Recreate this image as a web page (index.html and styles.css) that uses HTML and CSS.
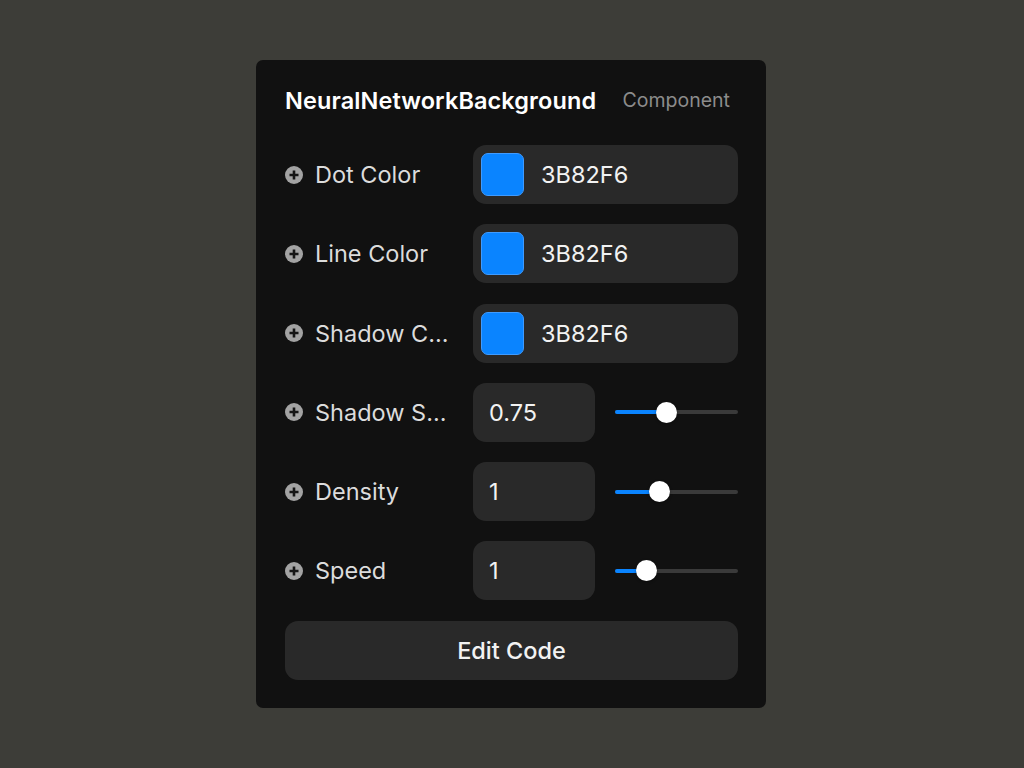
FILE: index.html
```html
<!DOCTYPE html>
<html>
<head>
<meta charset="utf-8">
<link rel="stylesheet" href="styles.css">
</head>
<body>
<div class="panel">
  <div class="header">
    <div class="title">NeuralNetworkBackground</div>
    <div class="subtitle">Component</div>
  </div>
  <div class="rows">
    <div class="row">
      <div class="label"><svg class="plus" viewBox="0 0 18 18"><circle cx="9" cy="9" r="9" fill="#a3a3a3"/><path d="M9 4.5v9M4.5 9h9" stroke="#151515" stroke-width="2.6"/></svg><span>Dot Color</span></div>
      <div class="field color"><span class="swatch"></span><span class="val">3B82F6</span></div>
    </div>
    <div class="row">
      <div class="label"><svg class="plus" viewBox="0 0 18 18"><circle cx="9" cy="9" r="9" fill="#a3a3a3"/><path d="M9 4.5v9M4.5 9h9" stroke="#151515" stroke-width="2.6"/></svg><span>Line Color</span></div>
      <div class="field color"><span class="swatch"></span><span class="val">3B82F6</span></div>
    </div>
    <div class="row">
      <div class="label"><svg class="plus" viewBox="0 0 18 18"><circle cx="9" cy="9" r="9" fill="#a3a3a3"/><path d="M9 4.5v9M4.5 9h9" stroke="#151515" stroke-width="2.6"/></svg><span>Shadow C...</span></div>
      <div class="field color"><span class="swatch"></span><span class="val">3B82F6</span></div>
    </div>
    <div class="row">
      <div class="label"><svg class="plus" viewBox="0 0 18 18"><circle cx="9" cy="9" r="9" fill="#a3a3a3"/><path d="M9 4.5v9M4.5 9h9" stroke="#151515" stroke-width="2.6"/></svg><span>Shadow S...</span></div>
      <div class="numrow">
        <div class="field num"><span class="val">0.75</span></div>
        <div class="slider"><div class="fill" style="width:51px"></div><div class="thumb" style="left:51px"></div></div>
      </div>
    </div>
    <div class="row">
      <div class="label"><svg class="plus" viewBox="0 0 18 18"><circle cx="9" cy="9" r="9" fill="#a3a3a3"/><path d="M9 4.5v9M4.5 9h9" stroke="#151515" stroke-width="2.6"/></svg><span>Density</span></div>
      <div class="numrow">
        <div class="field num"><span class="val">1</span></div>
        <div class="slider"><div class="fill" style="width:44px"></div><div class="thumb" style="left:44px"></div></div>
      </div>
    </div>
    <div class="row">
      <div class="label"><svg class="plus" viewBox="0 0 18 18"><circle cx="9" cy="9" r="9" fill="#a3a3a3"/><path d="M9 4.5v9M4.5 9h9" stroke="#151515" stroke-width="2.6"/></svg><span>Speed</span></div>
      <div class="numrow">
        <div class="field num"><span class="val">1</span></div>
        <div class="slider"><div class="fill" style="width:31px"></div><div class="thumb" style="left:31px"></div></div>
      </div>
    </div>
  </div>
  <div class="button">Edit Code</div>
</div>
</body>
</html>
```
FILE: styles.css
```css
html, body {
  margin: 0;
  padding: 0;
}
body {
  background: #3d3d38;
  width: 1024px;
  height: 768px;
  font-family: Inter, "Noto Sans", sans-serif;
  overflow: hidden;
}
.panel {
  margin: 60px 0 0 256px;
  width: 510px;
  box-sizing: border-box;
  background: #111111;
  border-radius: 7px;
  padding: 24px 28px 28px 29px;
}
.header {
  display: flex;
  align-items: center;
  justify-content: space-between;
  height: 32px;
  padding-right: 8px;
}
.title {
  color: #ffffff;
  font-size: 23.5px;
  font-weight: 600;
  letter-spacing: 0.1px;
}
.subtitle {
  color: #8c8c8c;
  font-size: 19.5px;
  font-weight: 400;
}
.rows {
  margin-top: 29px;
  display: flex;
  flex-direction: column;
  gap: 20.25px;
}
.row {
  display: grid;
  grid-template-columns: 188px 1fr;
  align-items: center;
  height: 59px;
}
.label {
  display: flex;
  align-items: center;
  gap: 12px;
  color: #dcdcdc;
  font-size: 23.5px;
}
.plus {
  width: 18px;
  height: 18px;
  flex: none;
}
.field {
  background: #292929;
  border-radius: 13px;
  height: 59px;
  box-sizing: border-box;
  display: flex;
  align-items: center;
  color: #f2f2f2;
  font-size: 23.5px;
}
.color {
  padding-left: 8px;
  gap: 17px;
}
.swatch {
  width: 43px;
  height: 43px;
  box-sizing: border-box;
  background: #0a84ff;
  border: 1px solid #3f9bff;
  border-radius: 7px;
}
.numrow {
  display: grid;
  grid-template-columns: 122px 1fr;
  gap: 20px;
  align-items: center;
}
.num {
  padding-left: 16px;
}
.slider {
  position: relative;
  height: 4px;
  background: #3a3a3a;
  border-radius: 2px;
}
.fill {
  position: absolute;
  left: 0;
  top: 0;
  height: 4px;
  background: #0a84ff;
  border-radius: 2px;
}
.thumb {
  position: absolute;
  top: 50%;
  width: 21px;
  height: 21px;
  margin-left: -10.5px;
  margin-top: -10.5px;
  background: #ffffff;
  border-radius: 50%;
  box-shadow: 0 1px 3px rgba(0,0,0,0.4);
}
.button {
  margin-top: 20.25px;
  height: 59px;
  background: #292929;
  border-radius: 13px;
  display: flex;
  align-items: center;
  justify-content: center;
  color: #f2f2f2;
  font-size: 23.5px;
  font-weight: 500;
}
```
